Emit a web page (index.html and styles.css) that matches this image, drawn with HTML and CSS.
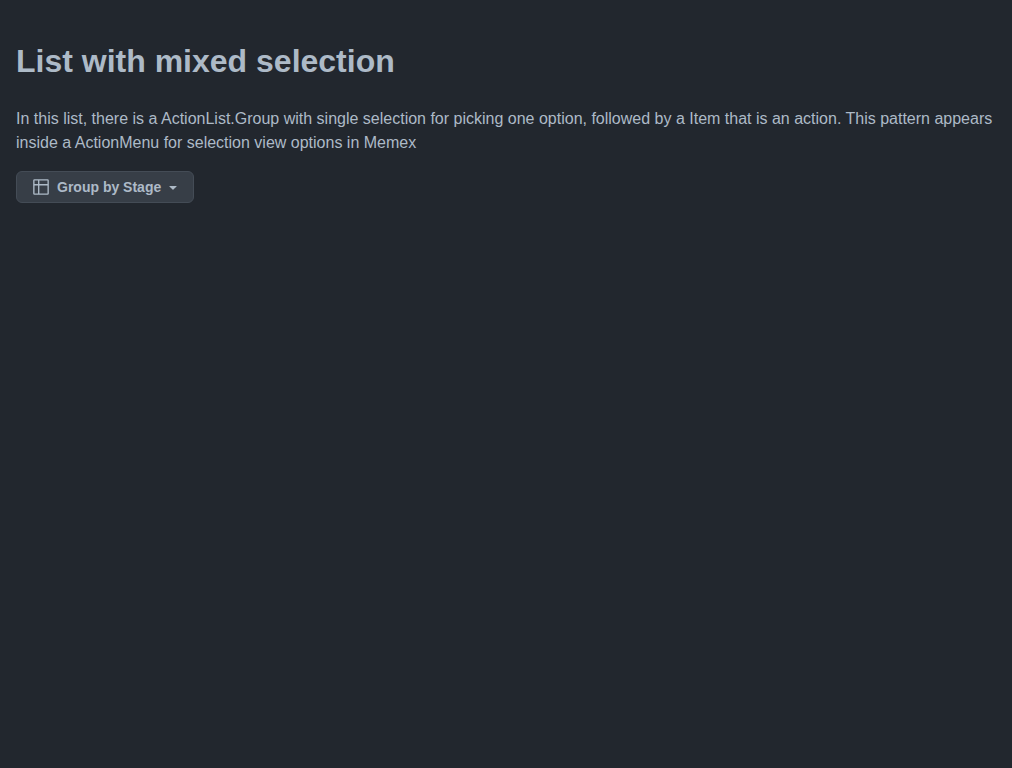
FILE: index.html
```
<!DOCTYPE html>
<html lang="en">
<head>
<meta charset="utf-8">
<meta name="viewport" content="width=device-width, initial-scale=1">
<title>List with mixed selection</title>
<link rel="stylesheet" href="styles.css">
</head>
<body>
<main class="page">
  <h1 class="title">List with mixed selection</h1>
  <p class="description">In this list, there is a ActionList.Group with single selection for picking one option, followed by a Item that is an action. This pattern appears inside a ActionMenu for selection view options in Memex</p>
  <button class="menu-button" type="button" aria-haspopup="true" aria-expanded="false">
    <svg class="icon" aria-hidden="true" viewBox="0 0 16 16" width="16" height="16"><g fill="none" stroke="currentColor" stroke-width="1.35"><rect x=".85" y=".85" width="14.3" height="14.3" rx=".7"/><path d="M5.7 1v14M1 5.7h14"/></g></svg>
    <span class="label">Group by Stage
      <svg class="icon" aria-hidden="true" viewBox="0 0 16 16" width="16" height="16"><path d="M4.427 7.427l3.396 3.396a.25.25 0 00.354 0l3.396-3.396A.25.25 0 0011.396 7H4.604a.25.25 0 00-.177.427z"/></svg>
    </span>
  </button>
</main>
</body>
</html>
```
FILE: styles.css
```
* {
  box-sizing: border-box;
}

body {
  margin: 0;
  background: #22272e;
  color: #adbac7;
  font-family: "Liberation Sans", Arial, sans-serif;
  font-size: 16px;
  line-height: 24px;
}

.page {
  padding: 16px;
}

.title {
  margin: 21px 0 22px;
  font-size: 32px;
  line-height: 48px;
}

.description {
  margin: 0 0 16px;
}

.menu-button {
  display: inline-flex;
  align-items: center;
  gap: 8px;
  padding: 5px 12px 5px 16px;
  border: 1px solid #444c56;
  border-radius: 6px;
  background: #373e47;
  color: #adbac7;
  font-family: inherit;
  font-size: 14px;
  font-weight: 600;
  line-height: 20px;
  cursor: pointer;
}

.label {
  display: flex;
  align-items: center;
  gap: 4px;
}

.icon {
  display: block;
  flex: none;
  fill: currentColor;
}
```
